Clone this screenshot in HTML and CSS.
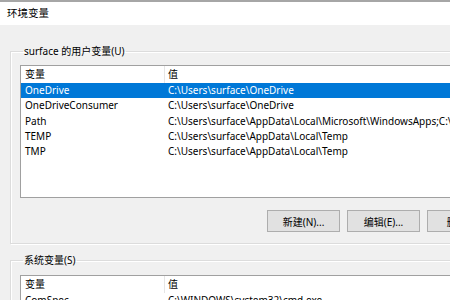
FILE: index.html
```html
<!DOCTYPE html>
<html lang="zh-CN">
<head>
    <meta charset="UTF-8">
    <title>环境变量</title>
    <link rel="stylesheet" href="styles.css">
</head>
<body>
    <div class="window">
        <div class="title-bar">环境变量</div>

        <div class="dialog">
            <!-- user variables -->
            <fieldset class="group user-group">
                <legend>surface 的用户变量(U)</legend>
                <div class="list-view user-list">
                    <div class="list-row list-header">
                        <span class="col-name">变量</span>
                        <span class="col-value">值</span>
                    </div>
                    <div class="list-row selected">
                        <span class="col-name">OneDrive</span>
                        <span class="col-value">C:\Users\surface\OneDrive</span>
                    </div>
                    <div class="list-row">
                        <span class="col-name">OneDriveConsumer</span>
                        <span class="col-value">C:\Users\surface\OneDrive</span>
                    </div>
                    <div class="list-row">
                        <span class="col-name">Path</span>
                        <span class="col-value">C:\Users\surface\AppData\Local\Microsoft\WindowsApps;C:\Users\surface\AppData</span>
                    </div>
                    <div class="list-row">
                        <span class="col-name">TEMP</span>
                        <span class="col-value">C:\Users\surface\AppData\Local\Temp</span>
                    </div>
                    <div class="list-row">
                        <span class="col-name">TMP</span>
                        <span class="col-value">C:\Users\surface\AppData\Local\Temp</span>
                    </div>
                </div>
                <div class="button-row">
                    <button class="win-button">新建(N)...</button>
                    <button class="win-button">编辑(E)...</button>
                    <button class="win-button">删除(D)</button>
                </div>
            </fieldset>

            <!-- system variables -->
            <fieldset class="group system-group">
                <legend>系统变量(S)</legend>
                <div class="list-view">
                    <div class="list-row list-header">
                        <span class="col-name">变量</span>
                        <span class="col-value">值</span>
                    </div>
                    <div class="list-row">
                        <span class="col-name">ComSpec</span>
                        <span class="col-value">C:\WINDOWS\system32\cmd.exe</span>
                    </div>
                </div>
            </fieldset>
        </div>
    </div>
</body>
</html>
```

FILE: styles.css
```css
/* Variables */
:root {
    --dialog-bg: #f0f0f0;
    --text-color: #000;
    --select-color: #0078d7;
    --list-border: #a0a0a0;
    --group-line: #dcdcdc;
    --button-bg: #e1e1e1;
    --button-border: #adadad;
}

/* Global Styles */
html,
body {
    margin: 0;
    padding: 0;
    width: 450px;
    height: 300px;
    overflow: hidden;
    background: var(--dialog-bg);
    font-family: "Noto Sans", "Noto Sans CJK SC", sans-serif;
    font-size: 10px;
    color: var(--text-color);
}

.window {
    display: flex;
    flex-direction: column;
    height: 300px;
    overflow: hidden;
}

.title-bar {
    flex: none;
    height: 23px;
    line-height: 23px;
    padding-left: 7px;
    background: #fff;
    border-top: 2px solid #a6a6a6;
    font-size: 10.5px;
}

.dialog {
    display: flex;
    flex-direction: column;
    padding: 18px 0 0 10px;
}

/* Group boxes */
.group {
    margin: 0;
    min-width: 0;
    width: 480px;
    border: 1px solid var(--group-line);
    box-shadow: inset 1px 1px 0 #fff, 1px 1px 0 #fff;
    padding: 6px 0 11px 9px;
}

.group legend {
    padding: 0 1px;
    margin-left: 3px;
    line-height: 16px;
}

.system-group {
    margin-top: 8px;
    padding-top: 7px;
}

/* List view */
.list-view {
    background: #fff;
    border: 1px solid var(--list-border);
    width: 470px;
    overflow: hidden;
}

.user-list {
    height: 131px;
}

.list-row {
    display: grid;
    grid-template-columns: 143px 1fr;
    height: 15.3px;
    line-height: 15.3px;
    white-space: nowrap;
}

.list-row span {
    overflow: hidden;
}

.list-header {
    height: 17px;
    line-height: 17px;
}

.list-header .col-value {
    border-left: 1px solid #e5e5e5;
    padding-left: 3px;
}

.col-name {
    padding-left: 4px;
}

.col-value {
    padding-left: 4px;
}

.selected {
    background: var(--select-color);
    color: #fff;
}

/* Buttons */
.button-row {
    display: flex;
    gap: 7px;
    margin-top: 12px;
    padding-left: 247px;
}

.win-button {
    flex: none;
    width: 73px;
    height: 22px;
    padding: 0;
    background: var(--button-bg);
    border: 1px solid var(--button-border);
    font-family: inherit;
    font-size: 10px;
    color: var(--text-color);
}
```
